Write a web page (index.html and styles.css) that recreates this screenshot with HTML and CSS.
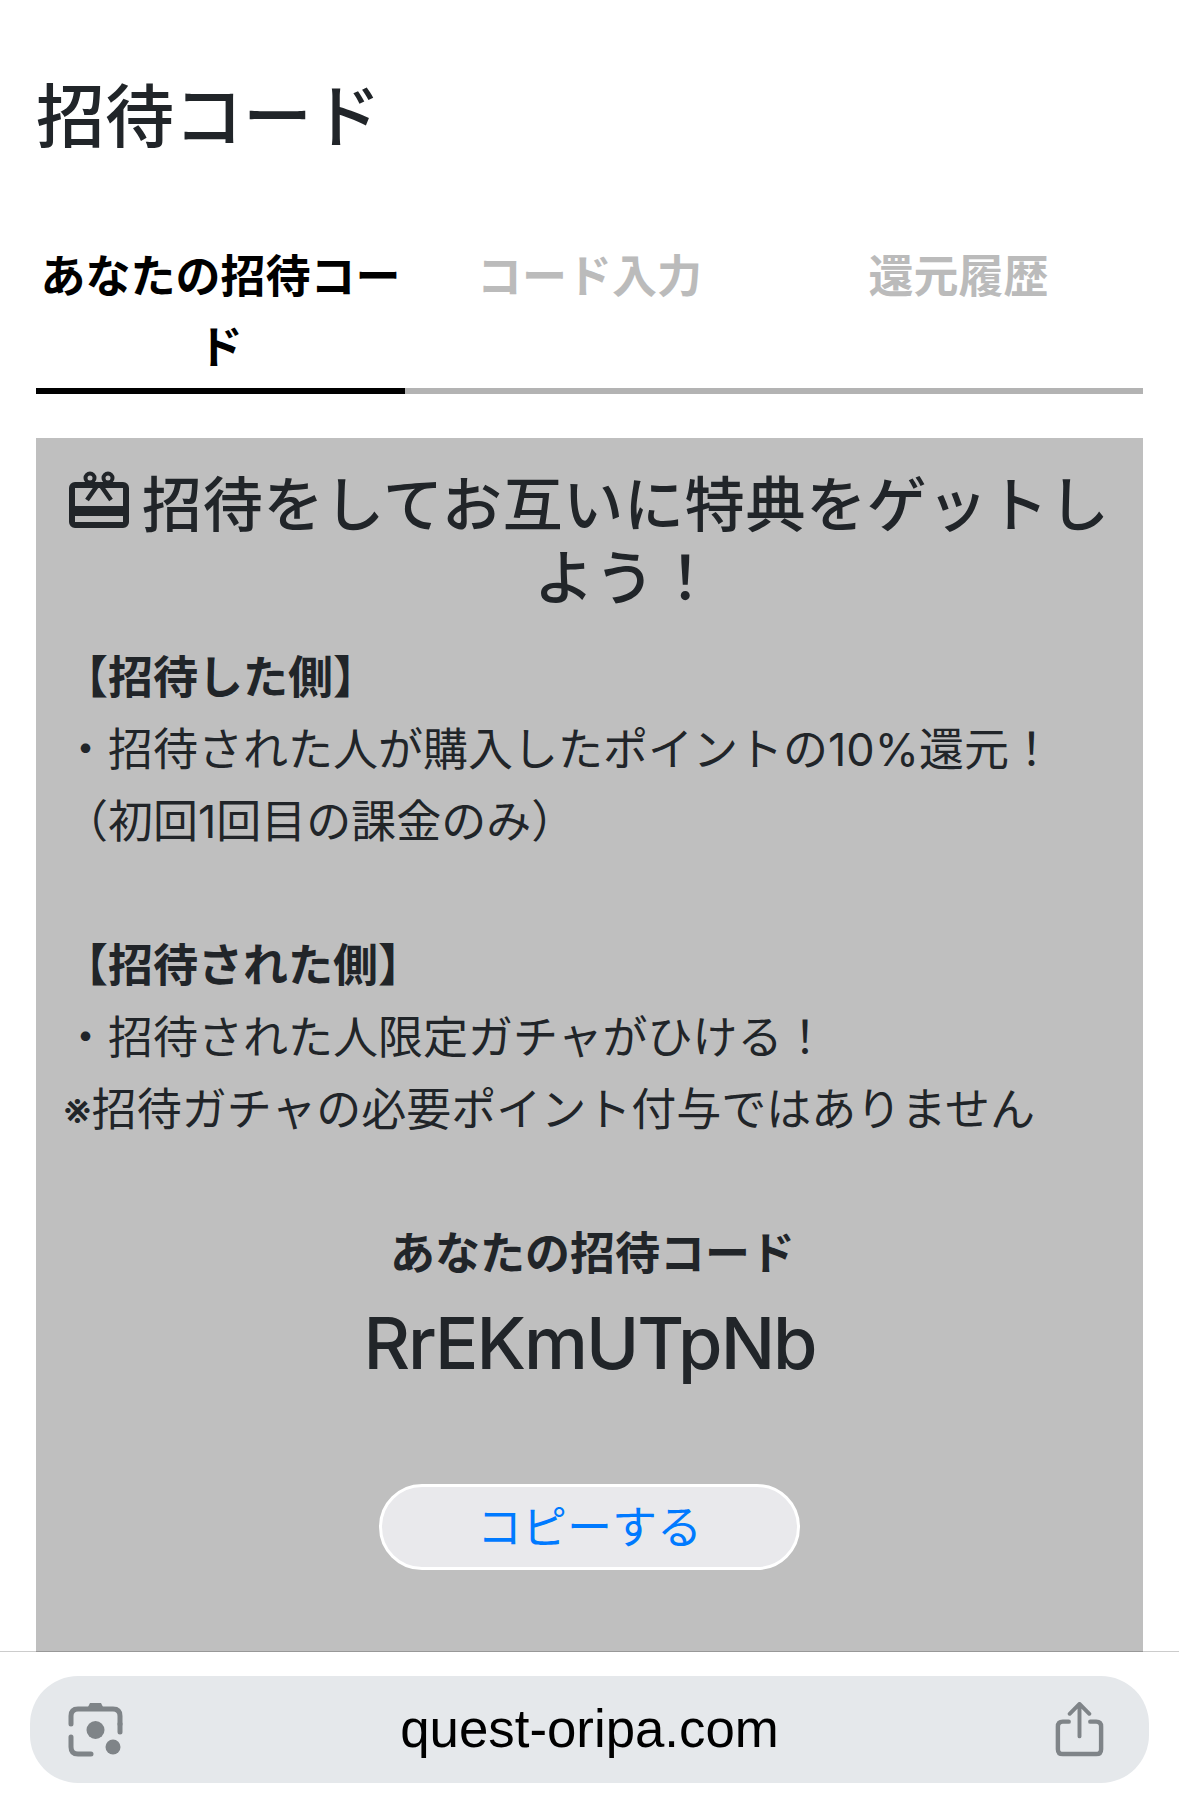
FILE: index.html
```html
<!DOCTYPE html>
<html lang="ja">
<head>
  <meta charset="UTF-8" />
  <meta name="viewport" content="width=device-width, initial-scale=1.0">
  <title>招待コード</title>
  <link rel="stylesheet" href="styles.css">
</head>
<body>

  <main class="page-content">
    <h1 class="page-title">招待コード</h1>

    <!-- Tabs -->
    <div class="tabs">
      <div class="tab active">あなたの招待コード</div>
      <div class="tab">コード入力</div>
      <div class="tab">還元履歴</div>
    </div>

    <section class="invite-panel">
      <h2 class="invite-title">
        <svg class="gift-icon" viewBox="0 0 60 57" aria-hidden="true">
          <rect x="3" y="14" width="54" height="40" rx="3" fill="none" stroke="#212529" stroke-width="6"/>
          <rect x="3" y="35" width="54" height="10" fill="#212529"/>
          <circle cx="21" cy="7" r="4.5" fill="#bfbfbf" stroke="#212529" stroke-width="4"/>
          <circle cx="39" cy="7" r="4.5" fill="#bfbfbf" stroke="#212529" stroke-width="4"/>
          <path d="M30 12 L18 29 M30 12 L42 29" fill="none" stroke="#212529" stroke-width="4.5"/>
        </svg>
        招待をしてお互いに特典をゲットし<span class="title-rest">よう！</span>
      </h2>

      <div class="invite-text">
        <p><strong>【招待した側】</strong></p>
        <p>・招待された人が購入したポイントの10%還元！</p>
        <p>（初回1回目の課金のみ）</p>
        <p>&nbsp;</p>
        <p><strong>【招待された側】</strong></p>
        <p>・招待された人限定ガチャがひける！</p>
        <p>※招待ガチャの必要ポイント付与ではありません</p>
      </div>

      <div class="code-section">
        <div class="code-label">あなたの招待コード</div>
        <div class="code-value">RrEKmUTpNb</div>
        <button class="copy-btn">コピーする</button>
      </div>
    </section>
  </main>

  <footer class="browser-bar">
    <div class="url-bar">
      <svg class="bar-icon" viewBox="0 0 55 55" aria-hidden="true">
        <path d="M19 7 L22 1 H33 L36 7 Z" fill="#7f8488"/>
        <path d="M3 22 V14 Q3 7 10 7 H45 Q52 7 52 14 V22" fill="none" stroke="#7f8488" stroke-width="5" stroke-linecap="round"/>
        <path d="M3 35 V45 Q3 52 10 52 H23" fill="none" stroke="#7f8488" stroke-width="5" stroke-linecap="round"/>
        <path d="M52 22 V30" fill="none" stroke="#7f8488" stroke-width="5" stroke-linecap="round"/>
        <circle cx="27.5" cy="28" r="9" fill="#7f8488"/>
        <circle cx="45" cy="45" r="7.5" fill="#7f8488"/>
      </svg>
      <span class="url-text">quest-oripa.com</span>
      <svg class="bar-icon" viewBox="0 0 50 56" aria-hidden="true">
        <path d="M14 20 H8 Q3 20 3 25 V48 Q3 53 8 53 H42 Q47 53 47 48 V25 Q47 20 42 20 H36" fill="none" stroke="#7f8488" stroke-width="4.5" stroke-linecap="round"/>
        <path d="M25 35 V3 M15 12 L25 2 L35 12" fill="none" stroke="#7f8488" stroke-width="4" stroke-linecap="round" stroke-linejoin="round"/>
      </svg>
    </div>
  </footer>

</body>
</html>
```

FILE: styles.css
```css
html, body {
  height: 1800px;
}

body {
  margin: 0;
  display: flex;
  flex-direction: column;
  overflow: hidden;
  background: #fff;
  color: #212529;
  font-family: Inter, "Noto Sans CJK JP", sans-serif;
}

.page-content {
  flex: 1;
  min-height: 0;
  overflow: hidden;
  padding: 75px 36px 0;
  display: flex;
  flex-direction: column;
}

.page-title {
  margin: 0 0 82px;
  font-size: 69px;
  line-height: 84px;
  font-weight: 500;
}

.tabs {
  display: flex;
  border-bottom: 6px solid #b3b3b3;
  margin-bottom: 44px;
}

.tab {
  flex: 1;
  margin-bottom: -6px;
  padding-bottom: 5px;
  border-bottom: 6px solid transparent;
  text-align: center;
  font-size: 45px;
  line-height: 71px;
  font-weight: 700;
  color: #bbb;
}

.tab.active {
  color: #000;
  border-bottom-color: #000;
}

.invite-panel {
  flex: 1;
  background: #bfbfbf;
  padding: 31px 27px 0;
}

.invite-title {
  margin: 0 0 27px;
  text-align: center;
  font-size: 60px;
  line-height: 73px;
  font-weight: 500;
  letter-spacing: 0.7px;
}

.title-rest {
  display: block;
  padding-left: 71px;
}

.gift-icon {
  width: 60px;
  height: 57px;
  vertical-align: -1px;
  margin-right: -4px;
}

.invite-text {
  font-size: 45px;
  line-height: 72px;
}

.invite-text p {
  margin: 0;
  white-space: nowrap;
}

.invite-text strong {
  font-weight: 700;
}

.code-section {
  display: flex;
  flex-direction: column;
  align-items: center;
  margin-top: 72px;
  margin-left: -27px;
  margin-right: -27px;
}

.code-label {
  padding-left: 6px;
  font-size: 45px;
  line-height: 72px;
  font-weight: 700;
}

.code-value {
  font-size: 72px;
  line-height: 100px;
  font-weight: 500;
  letter-spacing: -2px;
  margin-top: 3px;
}

.copy-btn {
  margin-top: 91px;
  width: 421px;
  height: 86px;
  box-sizing: border-box;
  border: 3px solid #fff;
  border-radius: 43px;
  background: #e9e9ec;
  color: #007aff;
  font-family: inherit;
  font-size: 45px;
  padding: 0 0 6px;
}

.browser-bar {
  position: relative;
  height: 148px;
  flex-shrink: 0;
  box-sizing: border-box;
  padding: 24px 30px 0;
  background: #fff;
  box-shadow: 0 -1px 0 rgba(0, 0, 0, 0.2);
}

.url-bar {
  height: 107px;
  padding: 0 42px 0 38px;
  border-radius: 48px;
  background: #e5e8eb;
  display: flex;
  align-items: center;
}

.url-text {
  flex: 1;
  padding: 0 0 2px 4px;
  text-align: center;
  font-family: "Liberation Sans", sans-serif;
  font-size: 52.8px;
  color: #000;
}

.bar-icon {
  width: 55px;
  height: 55px;
}
```
